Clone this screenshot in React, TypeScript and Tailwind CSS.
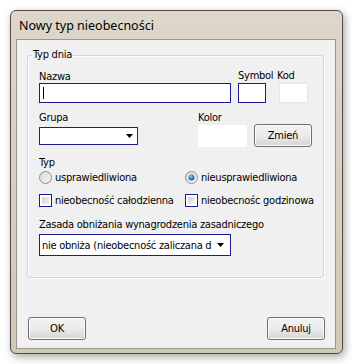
import React from "react";

function Radio({ checked }: { checked?: boolean }) {
  return (
    <svg width="13" height="13" viewBox="0 0 13 13" className="shrink-0">
      <defs>
        <linearGradient id="rg" x1="0" y1="0" x2="1" y2="1">
          <stop offset="0" stopColor="#d8d8d8" />
          <stop offset="1" stopColor="#f6f6f6" />
        </linearGradient>
        <radialGradient id="dot" cx="0.4" cy="0.35" r="0.7">
          <stop offset="0" stopColor="#8fd2f5" />
          <stop offset="0.6" stopColor="#2a7dc0" />
          <stop offset="1" stopColor="#164c86" />
        </radialGradient>
      </defs>
      <circle cx="6.5" cy="6.5" r="6" fill="url(#rg)" stroke="#8c8e8f" />
      {checked && <circle cx="6.5" cy="6.5" r="3" fill="url(#dot)" />}
    </svg>
  );
}

function Checkbox() {
  return (
    <div className="w-[13px] h-[13px] shrink-0 border border-[#1b1b8f] bg-white p-[2px]">
      <div className="w-full h-full bg-gradient-to-br from-[#d2d2d2] to-[#f4f4f4]" />
    </div>
  );
}

function Arrow() {
  return (
    <svg width="7" height="4" viewBox="0 0 7 4" className="shrink-0">
      <polygon points="0,0 7,0 3.5,4" fill="#000" />
    </svg>
  );
}

function Button({ label }: { label: string }) {
  return (
    <div className="w-[58px] h-[23px] rounded-[3px] border border-[#707070] bg-gradient-to-b from-[#f2f2f2] via-[#ebebeb] to-[#d5d5d5] flex items-center justify-center shadow-[inset_0_0_0_1px_#fbfbfb]">
      {label}
    </div>
  );
}

export default function App() {
  return (
    <div className="w-[352px] h-[364px] bg-white pt-[10px] pl-[10px] text-[11px] leading-[13px] tracking-[-0.25px] text-black font-['DejaVu_Sans_Condensed','DejaVu_Sans',sans-serif]">
      <div className="w-[333px] h-[344px] rounded-[6px] border border-[#4f4c44] bg-gradient-to-b from-[#dcd7ca] to-[#cfc9b8] shadow-[2px_3px_8px_rgba(0,0,0,0.35)] flex flex-col">
        {/* title bar */}
        <div className="h-[28px] flex items-center pl-[8px] pt-[1px] text-[12.5px] tracking-normal font-['Noto_Sans',sans-serif]">
          Nowy typ nieobecności
        </div>

        {/* client area */}
        <div className="ml-[5px] mr-[6px] mb-[4px] flex-1 border border-[#9c9686] bg-[#f0f0f0] flex flex-col">
          {/* group box */}
          <div className="relative ml-[10px] mt-[15px] w-[297px] h-[223px] border border-[#d6d6d6] rounded-[3px] shadow-[inset_1px_1px_0_#ffffff,1px_1px_0_#ffffff] pl-[11px] pt-[14px]">
            <div className="absolute -top-[8px] left-[4px] bg-[#f0f0f0] px-[1px]">Typ dnia</div>

            {/* Nazwa / Symbol / Kod */}
            <div className="flex">
              <div className="flex flex-col">
                <span className="h-[13px]">Nazwa</span>
                <div className="w-[192px] h-[20px] border border-[#1b1b8f] bg-white flex items-center pl-[3px]">
                  <div className="w-px h-[12px] bg-black" />
                </div>
              </div>
              <div className="flex flex-col ml-[7px] w-[39px]">
                <span className="h-[13px] -mt-[1px] mb-[1px]">Symbol</span>
                <div className="w-[28px] h-[20px] border border-[#1b1b8f] bg-white" />
              </div>
              <div className="flex flex-col">
                <span className="h-[13px] -mt-[1px] mb-[1px]">Kod</span>
                <div className="ml-[2px] w-[29px] h-[20px] border border-[#e6e6e6] bg-white" />
              </div>
            </div>

            {/* Grupa / Kolor */}
            <div className="flex mt-[8px]">
              <div className="flex flex-col w-[159px]">
                <span className="h-[13px]">Grupa</span>
                <div className="mt-[3px] w-[99px] h-[18px] border border-[#1b1b8f] bg-white flex items-center justify-end pr-[4px]">
                  <Arrow />
                </div>
              </div>
              <div className="flex flex-col">
                <span className="h-[13px]">Kolor</span>
                <div className="flex items-center">
                  <div className="w-[49px] h-[22px] bg-white" />
                  <div className="ml-[7px]">
                    <Button label="Zmień" />
                  </div>
                </div>
              </div>
            </div>

            {/* Typ */}
            <div className="mt-[9px] h-[13px]">Typ</div>
            <div className="flex items-center h-[14px] mt-[1px]">
              <div className="flex items-center gap-[3px] w-[146px]">
                <Radio />
                <span>usprawiedliwiona</span>
              </div>
              <div className="flex items-center gap-[3px]">
                <Radio checked />
                <span>nieusprawiedliwiona</span>
              </div>
            </div>

            {/* checkboxes */}
            <div className="flex items-center h-[14px] mt-[9px]">
              <div className="flex items-center gap-[3px] w-[146px]">
                <Checkbox />
                <span>nieobecność całodzienna</span>
              </div>
              <div className="flex items-center gap-[3px]">
                <Checkbox />
                <span>nieobecnośc godzinowa</span>
              </div>
            </div>

            {/* Zasada */}
            <div className="mt-[11px] h-[13px]">Zasada obniżania wynagrodzenia zasadniczego</div>
            <div className="mt-[3px] w-[192px] h-[22px] border border-[#1b1b8f] bg-white flex items-center pl-[2px] pr-[6px]">
              <span className="flex-1 whitespace-nowrap">nie obniża (nieobecność zaliczana d</span>
              <Arrow />
            </div>
          </div>

          <div className="flex-1" />

          {/* buttons */}
          <div className="flex justify-between pl-[11px] pr-[10px] mb-[8px]">
            <Button label="OK" />
            <Button label="Anuluj" />
          </div>
        </div>
      </div>
    </div>
  );
}
